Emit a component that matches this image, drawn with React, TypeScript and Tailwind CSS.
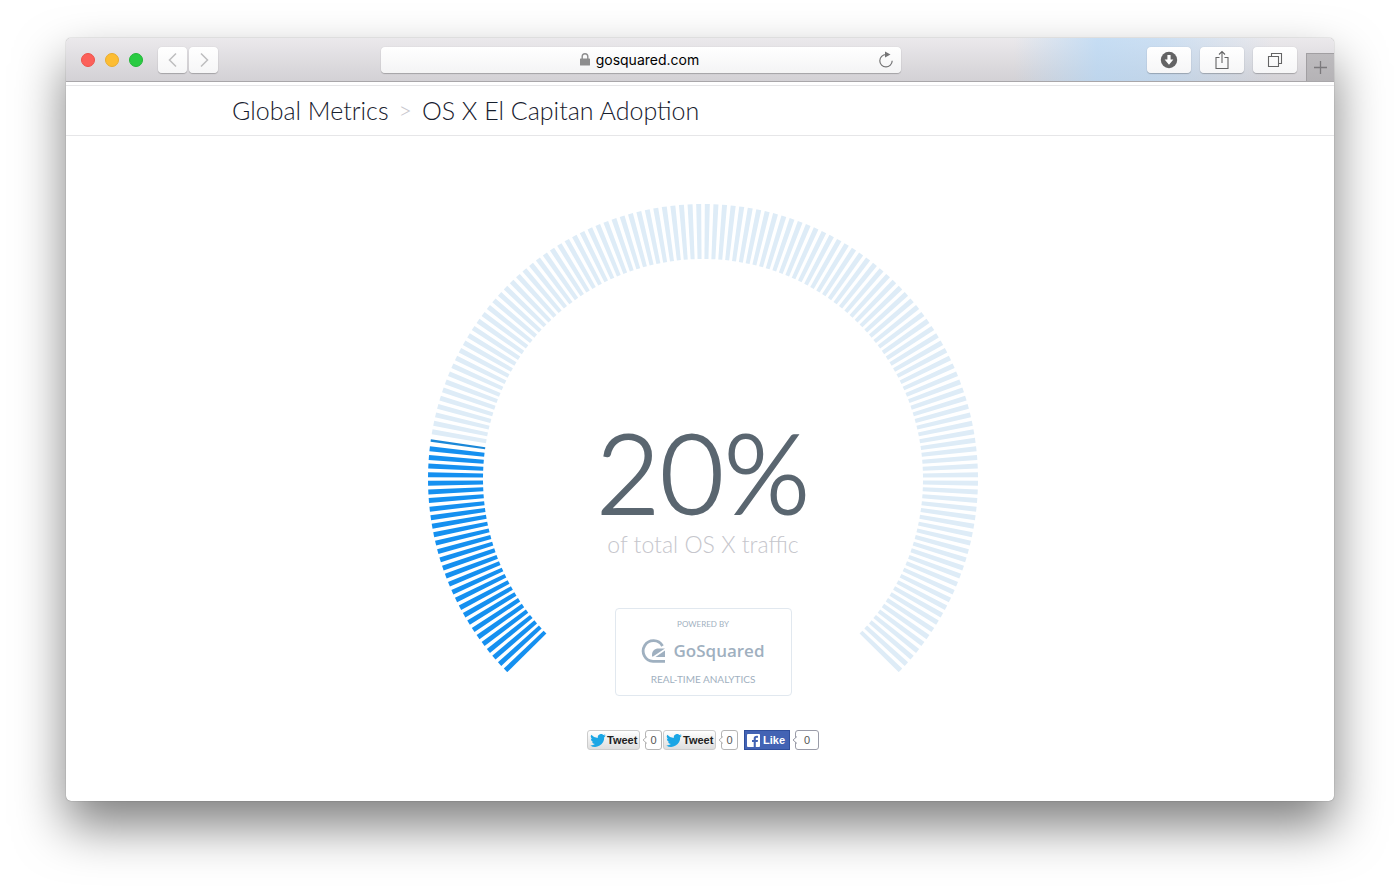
import type { ReactNode } from 'react'

const SEGMENTS = 150
const PERCENT = 20
const STEP = 270 / SEGMENTS
const HALF_BAR = 0.52

// ── Gauge ─────────────────────────────────────────────────────────────────────

function barPath(center: number, from: number, to: number) {
  const point = (radius: number, deg: number) => {
    const a = (deg * Math.PI) / 180
    return `${(275 + radius * Math.cos(a)).toFixed(2)} ${(275 + radius * Math.sin(a)).toFixed(2)}`
  }
  return `M${point(220, center + from)}L${point(275, center + from)}L${point(275, center + to)}L${point(220, center + to)}Z`
}

function Gauge() {
  const filled = (SEGMENTS * PERCENT) / 100
  return (
    <svg viewBox="0 0 550 468" className="block w-full" aria-hidden="true">
      {Array.from({ length: SEGMENTS }, (_, i) => {
        const center = 135 + STEP * (i + 0.5)
        const last = i === filled - 1
        if (last) return <path key={i} d={barPath(center, -0.3, 0.2)} fill="#1b88d8" />
        return <path key={i} d={barPath(center, -HALF_BAR, HALF_BAR)} fill={i < filled ? '#1590f0' : '#deecf7'} />
      })}
    </svg>
  )
}

// ── Browser chrome ────────────────────────────────────────────────────────────

function ToolbarButton({ label, narrow, children }: { label: string; narrow?: boolean; children: ReactNode }) {
  return (
    <button
      type="button"
      aria-label={label}
      className={[
        'flex h-[26px] items-center justify-center rounded bg-gradient-to-b from-white to-[#f6f6f7]',
        'shadow-[0_1px_1px_rgba(0,0,0,0.22),0_0_1px_rgba(0,0,0,0.2)]',
        narrow ? 'w-[29px]' : 'w-11',
      ].join(' ')}
    >
      {children}
    </button>
  )
}

function Toolbar() {
  return (
    <header className="relative flex h-11 shrink-0 items-center border-b border-[#a9a7aa] bg-gradient-to-b from-[#ebe9ec] to-[#d3d1d5]">
      <div className="absolute inset-y-0 right-[60px] w-[260px] bg-[linear-gradient(90deg,transparent,rgba(178,215,248,0.65)_32%,rgba(178,215,248,0.55)_55%,transparent)]" />
      <div className="relative flex flex-8 items-center">
        <div className="ml-[15px] flex gap-[10px]">
          <button type="button" aria-label="Close" className="size-[14px] rounded-full border border-[#ed5249] bg-[#fc605a]" />
          <button type="button" aria-label="Minimize" className="size-[14px] rounded-full border border-[#e9ac2d] bg-[#fdbd33]" />
          <button type="button" aria-label="Zoom" className="size-[14px] rounded-full border border-[#22b637] bg-[#29cb42]" />
        </div>
        <div className="ml-[15px] flex gap-[2px]">
          <ToolbarButton label="Back" narrow>
            <svg width="10" height="16" fill="none" stroke="#bdbdbf" strokeWidth="1.5"><path d="M8 1.5 1.5 8 8 14.5" /></svg>
          </ToolbarButton>
          <ToolbarButton label="Forward" narrow>
            <svg width="10" height="16" fill="none" stroke="#bdbdbf" strokeWidth="1.5"><path d="M2 1.5 8.5 8 2 14.5" /></svg>
          </ToolbarButton>
        </div>
      </div>
      <div className="relative flex h-[26px] w-[41%] items-center rounded bg-gradient-to-b from-white to-[#f4f4f5] shadow-[0_1px_1px_rgba(0,0,0,0.22),0_0_1px_rgba(0,0,0,0.2)]">
        <div className="flex flex-1 items-center justify-center gap-[6px] pl-5 font-[Inter,sans-serif] text-sm leading-5 text-black">
          <svg width="10" height="13" viewBox="0 0 10 13" fill="none">
            <path d="M2.200 7V3.600a2.800 2.800 0 0 1 5.600 0V7" stroke="#8d8d8e" strokeWidth="1.400" />
            <rect y="5.500" width="10" height="7" rx=".6" fill="#8d8d8e" />
          </svg>
          <span>gosquared.com</span>
        </div>
        <button type="button" aria-label="Reload" className="mr-[7px]">
          <svg width="16" height="18" viewBox="0 0 16 18" fill="none">
            <path d="M8 3.5A6.2 6.2 0 1 0 14.2 9.8" stroke="#747475" strokeWidth="1.2" />
            <path d="M7 .5 12.5 3.6 7 6.6Z" fill="#747475" />
          </svg>
        </button>
      </div>
      <div className="relative flex flex-11 items-center justify-end gap-[9px] self-stretch">
        <ToolbarButton label="Downloads">
          <svg width="18" height="18" viewBox="0 0 18 18">
            <circle cx="9" cy="9" r="8.2" fill="#646465" />
            <path d="M7.4 4h3.2v4.6h2.8L9 13.7 4.6 8.6h2.8Z" fill="#fff" />
          </svg>
        </ToolbarButton>
        <ToolbarButton label="Share">
          <svg width="16" height="20" viewBox="0 0 16 20" fill="none" stroke="#646465" strokeWidth="1.1">
            <path d="M5.5 7.5H2v11h12v-11h-3.5M8 13V1.5M5 4.5l3-3 3 3" />
          </svg>
        </ToolbarButton>
        <ToolbarButton label="Show tabs">
          <svg width="16" height="16" viewBox="0 0 16 16" fill="none" stroke="#646465" strokeWidth="1.1">
            <path d="M1.5 4.500h10v10h-10ZM4.500 4.500v-3h10v10h-3" />
          </svg>
        </ToolbarButton>
        <button type="button" aria-label="New tab" className="flex size-7 items-center justify-center self-end border-l border-t border-[#a19fa2] bg-gradient-to-b from-[#bdbbbe] to-[#b5b3b6]">
          <svg width="13" height="13" stroke="#7b797c" strokeWidth="1.3"><path d="M0 6.5h13M6.5 0v13" /></svg>
        </button>
      </div>
    </header>
  )
}

// ── Share buttons ─────────────────────────────────────────────────────────────

function Count({ wide }: { wide?: boolean }) {
  return (
    <span
      className={[
        'relative ml-[5px] flex h-5 items-center justify-center rounded-[3px] border bg-white text-[11px] text-[#555]',
        wide ? 'w-6 border-[#9a9ca8]' : 'w-[17px] border-[#b5b5b5]',
      ].join(' ')}
    >
      <svg width="5" height="8" className="absolute -left-1 top-[5px]" fill="#fff" stroke={wide ? '#9a9ca8' : '#b5b5b5'}>
        <path d="M5 .5 1 4l4 3.5" />
      </svg>
      0
    </span>
  )
}

function TweetButton() {
  return (
    <div className="flex">
      <a href="#tweet" className="flex h-5 w-[53px] items-center gap-px rounded-[3px] border border-[#ccc] bg-gradient-to-b from-white to-[#dedede] pl-[2px] text-[11px] font-bold text-[#222]">
        <svg width="16" height="13" viewBox="0 0 24 20" fill="#1ba6e5" className="shrink-0">
          <path d="M24 2.400a10 10 0 0 1-2.800.8A5 5 0 0 0 23.300.500a10 10 0 0 1-3.100 1.200A4.900 4.900 0 0 0 11.800 6.200 14 14 0 0 1 1.700 1a4.900 4.900 0 0 0 1.500 6.600 5 5 0 0 1-2.200-.6 4.900 4.900 0 0 0 3.900 4.900 5 5 0 0 1-2.200.1 4.900 4.900 0 0 0 4.600 3.400A10 10 0 0 1 0 17.500 14 14 0 0 0 21.500 5A10 10 0 0 0 24 2.400Z" />
        </svg>
        Tweet
      </a>
      <Count />
    </div>
  )
}

function LikeButton() {
  return (
    <div className="ml-[5px] flex">
      <a href="#like" className="flex h-5 w-[46px] items-center gap-[3px] border border-[#2f4e9c] bg-[#4363b4] pl-[2px] text-[11px] font-bold text-white">
        <svg width="13" height="13" viewBox="0 0 13 13" className="shrink-0">
          <rect width="13" height="13" rx="1" fill="#fff" />
          <path d="M8.800 13V8h1.900l.3-2H8.800V4.800c0-.7.3-1 1-1H11V1.900C8.200 1.500 6.700 2.500 6.700 4.600V6H5v2h1.700v5Z" fill="#4363b4" />
        </svg>
        Like
      </a>
      <Count wide />
    </div>
  )
}

function PoweredBy() {
  return (
    <a href="#gosquared" className="flex h-[88px] w-[177px] flex-col items-center rounded border border-[#e1e8ef] pt-[10px] text-[#9fb0c0]">
      <span className="text-[8px] leading-[10px]">POWERED BY</span>
      <span className="mt-2 flex items-center gap-2 font-['Open_Sans',sans-serif] text-[17px] leading-7 font-semibold">
        <svg width="24" height="24" viewBox="0 0 24 24" fill="none">
          <path d="M21.500 7A10.300 10.300 0 1 0 12 22.300H24" stroke="currentColor" strokeWidth="2.800" />
          <path d="M24 9.500h-6.500c-4 0-6.500 2.500-6.500 6.500v1.500h1Z" fill="currentColor" />
          <path d="M24 11.500v6.500h-9.500Z" fill="currentColor" />
        </svg>
        GoSquared
      </span>
      <span className="mt-2 text-[10px] leading-3">REAL-TIME ANALYTICS</span>
    </a>
  )
}

export default function App() {
  return (
    <div className="flex min-h-screen flex-col bg-white px-[66px] pt-[38px] pb-[94px] font-[Lato,sans-serif]">
      <div className="flex flex-1 flex-col overflow-hidden rounded-[5px] bg-white shadow-[0_0_1px_rgba(0,0,0,0.6),0_25px_50px_rgba(0,0,0,0.5)]">
        <Toolbar />
        <nav className="mt-[3px] border-y border-[#e6e6e8] pl-[166px]">
          <ol className="flex items-center gap-[10px] text-[25px] leading-[49px] font-light text-[#17202e]">
            <li><a href="#metrics">Global Metrics</a></li>
            <li aria-hidden="true" className="text-[23px] leading-[49px] text-[#c6c6cc]">&gt;</li>
            <li>OS X El Capitan Adoption</li>
          </ol>
        </nav>
        <main className="flex flex-1 flex-col items-center pt-[68px] pl-[6px]">
          <div className="relative w-full max-w-[550px]">
            <Gauge />
            <div className="absolute inset-x-0 top-[210px] flex flex-col items-center">
              <h1 className="text-[110px] leading-[114px] font-light text-[#5a6670] [-webkit-text-stroke:2px_#5a6670]">20%</h1>
              <p className="text-[23px] leading-8 font-light text-[#c6c6cc]">of total OS X traffic</p>
            </div>
          </div>
          <div className="relative -mt-16">
            <PoweredBy />
          </div>
          <div className="mt-[34px] flex gap-px font-['Liberation_Sans',sans-serif]">
            <TweetButton />
            <TweetButton />
            <LikeButton />
          </div>
        </main>
      </div>
    </div>
  )
}
